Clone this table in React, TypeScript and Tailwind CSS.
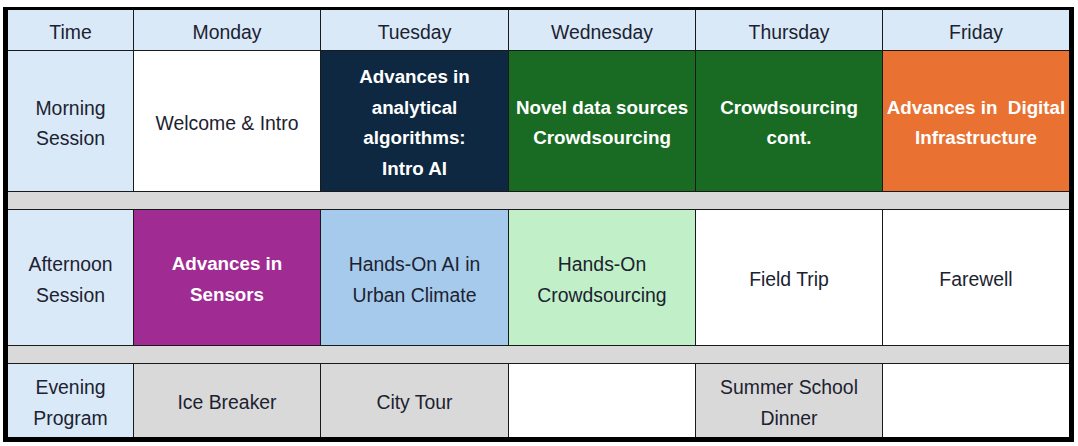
import React from "react";

type Cell = { lines: string[]; bg: string; bold?: boolean; white?: boolean };

const font = { fontFamily: '"Liberation Sans", Arial, sans-serif' };

function C({ lines, bg, bold, white }: Cell) {
  return (
    <div
      className={`${bg} flex flex-col items-center justify-center pt-[4px] text-center leading-[30.5px] ${
        bold ? "font-bold text-[18.8px]" : "text-[19.4px]"
      } ${white ? "text-white" : "text-[#1c2230]"}`}
    >
      {lines.map((l, i) => (
        <span key={i} className="whitespace-pre">
          {l}
        </span>
      ))}
    </div>
  );
}

export default function App() {
  const head = "bg-[#dae9f8]";
  return (
    <div className="w-[1078px] h-[446px] bg-white" style={font}>
      <div className="ml-[3px] pt-[7px]">
        <div className="w-[1071px] border-l-[5px] border-r-[5px] border-t-[3px] border-b-[5px] border-black">
          <div className="grid grid-cols-[125px_186px_187px_186px_186px_186px] grid-rows-[40px_140px_17px_135px_17px_73px] gap-px bg-[#1a1a1a]">
            <C lines={["Time"]} bg={head} />
            <C lines={["Monday"]} bg={head} />
            <C lines={["Tuesday"]} bg={head} />
            <C lines={["Wednesday"]} bg={head} />
            <C lines={["Thursday"]} bg={head} />
            <C lines={["Friday"]} bg={head} />

            <C lines={["Morning", "Session"]} bg={head} />
            <C lines={["Welcome & Intro"]} bg="bg-white" />
            <C
              lines={["Advances in", "analytical", "algorithms:", "Intro AI"]}
              bg="bg-[#0e2841]"
              bold
              white
            />
            <C lines={["Novel data sources", "Crowdsourcing"]} bg="bg-[#196b24]" bold white />
            <C lines={["Crowdsourcing", "cont."]} bg="bg-[#196b24]" bold white />
            <C lines={["Advances in  Digital", "Infrastructure"]} bg="bg-[#e97132]" bold white />

            <div className="col-span-6 bg-[#d9d9d9]" />

            <C lines={["Afternoon", "Session"]} bg={head} />
            <C lines={["Advances in", "Sensors"]} bg="bg-[#a02b93]" bold white />
            <C lines={["Hands-On AI in", "Urban Climate"]} bg="bg-[#a6caec]" />
            <C lines={["Hands-On", "Crowdsourcing"]} bg="bg-[#c1f0c8]" />
            <C lines={["Field Trip"]} bg="bg-white" />
            <C lines={["Farewell"]} bg="bg-white" />

            <div className="col-span-6 bg-[#d9d9d9]" />

            <C lines={["Evening", "Program"]} bg={head} />
            <C lines={["Ice Breaker"]} bg="bg-[#d9d9d9]" />
            <C lines={["City Tour"]} bg="bg-[#d9d9d9]" />
            <C lines={[""]} bg="bg-white" />
            <C lines={["Summer School", "Dinner"]} bg="bg-[#d9d9d9]" />
            <C lines={[""]} bg="bg-white" />
          </div>
        </div>
      </div>
    </div>
  );
}
